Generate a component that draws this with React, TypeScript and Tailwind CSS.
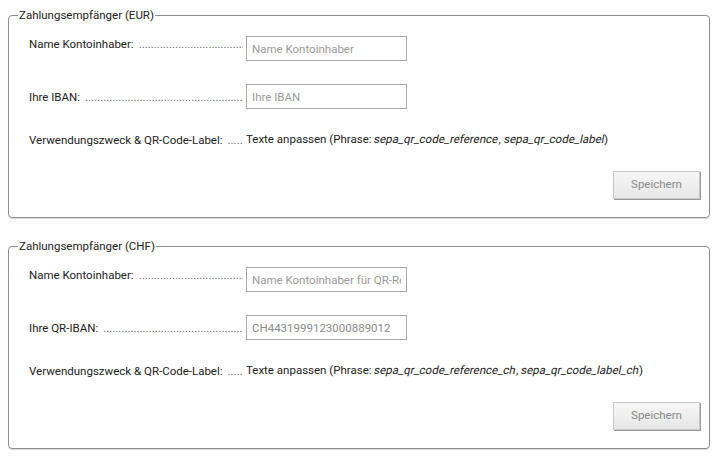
import React from 'react'

type Field = {
  label: string
  placeholder?: string
  value?: string
}

type Section = {
  title: string
  fields: Field[]
  phrases: string[]
}

const SECTIONS: Section[] = [
  {
    title: 'Zahlungsempfänger (EUR)',
    fields: [
      { label: 'Name Kontoinhaber:', placeholder: 'Name Kontoinhaber' },
      { label: 'Ihre IBAN:', placeholder: 'Ihre IBAN' },
    ],
    phrases: ['sepa_qr_code_reference', 'sepa_qr_code_label'],
  },
  {
    title: 'Zahlungsempfänger (CHF)',
    fields: [
      { label: 'Name Kontoinhaber:', placeholder: 'Name Kontoinhaber für QR-Rechnung' },
      { label: 'Ihre QR-IBAN:', value: 'CH4431999123000889012' },
    ],
    phrases: ['sepa_qr_code_reference_ch', 'sepa_qr_code_label_ch'],
  },
]

const DOTS = '.'.repeat(120)

// labels get a dotted leader up to the input column
function Label({ text, top }: { text: string; top?: boolean }) {
  return (
    <div className={`flex w-[214px] shrink-0 items-baseline overflow-hidden whitespace-nowrap leading-[16px] ${top ? 'self-start' : ''}`}>
      <span className="shrink-0 pr-[5px]">{text}</span>
      <span className="min-w-0 flex-1 overflow-hidden text-[#666]">{DOTS}</span>
    </div>
  )
}

function Phrase({ name }: { name: string }) {
  return <span className="inline-block -skew-x-12">{name}</span>
}

function Fieldset({ section }: { section: Section }) {
  return (
    <fieldset className="mr-[10px] rounded-[4px] border border-[#8e8e8e] pb-[18px] pl-[20px] pr-[9px] shadow-[0_1px_1px_rgba(0,0,0,0.15)]">
      <legend className="-ml-[11px] px-[1px] leading-[16px]">{section.title}</legend>

      <div className="mt-[13px] flex flex-col">
        {section.fields.map((f, i) => (
          <div key={i} className={`flex h-[25px] items-center gap-[3px] ${i > 0 ? 'mt-[23px]' : ''}`}>
            <Label text={f.label} top={i === 0} />
            <input
              readOnly
              placeholder={f.placeholder}
              defaultValue={f.value}
              className="h-[25px] w-[161px] border border-[#a9a9a9] bg-white px-[5px] text-[#8a8a8a] outline-none placeholder:text-[#9a9a9a]"
            />
          </div>
        ))}

        <div className="mt-[23px] flex h-[16px] items-center gap-[3px]">
          <Label text="Verwendungszweck & QR-Code-Label:" />
          <span className="whitespace-nowrap">
            Texte anpassen (Phrase: <Phrase name={section.phrases[0]} />, <Phrase name={section.phrases[1]} />)
          </span>
        </div>

        <div className="mt-[23px] flex justify-end">
          <button className="h-[28px] w-[87px] border border-[#c8c8c8] bg-gradient-to-b from-[#f6f6f6] to-[#e7e7e7] text-[#8a8a8a] shadow-[1px_1px_0_#9a9a9a]">
            Speichern
          </button>
        </div>
      </div>
    </fieldset>
  )
}

export default function App() {
  return (
    <div className="h-[465px] w-[720px] overflow-hidden bg-white pl-[8px] pt-[7px] font-['Roboto',_'Liberation_Sans',_sans-serif] text-[11.5px] text-[#222]">
      <div className="flex flex-col gap-[20px]">
        {SECTIONS.map((s) => (
          <Fieldset key={s.title} section={s} />
        ))}
      </div>
    </div>
  )
}
